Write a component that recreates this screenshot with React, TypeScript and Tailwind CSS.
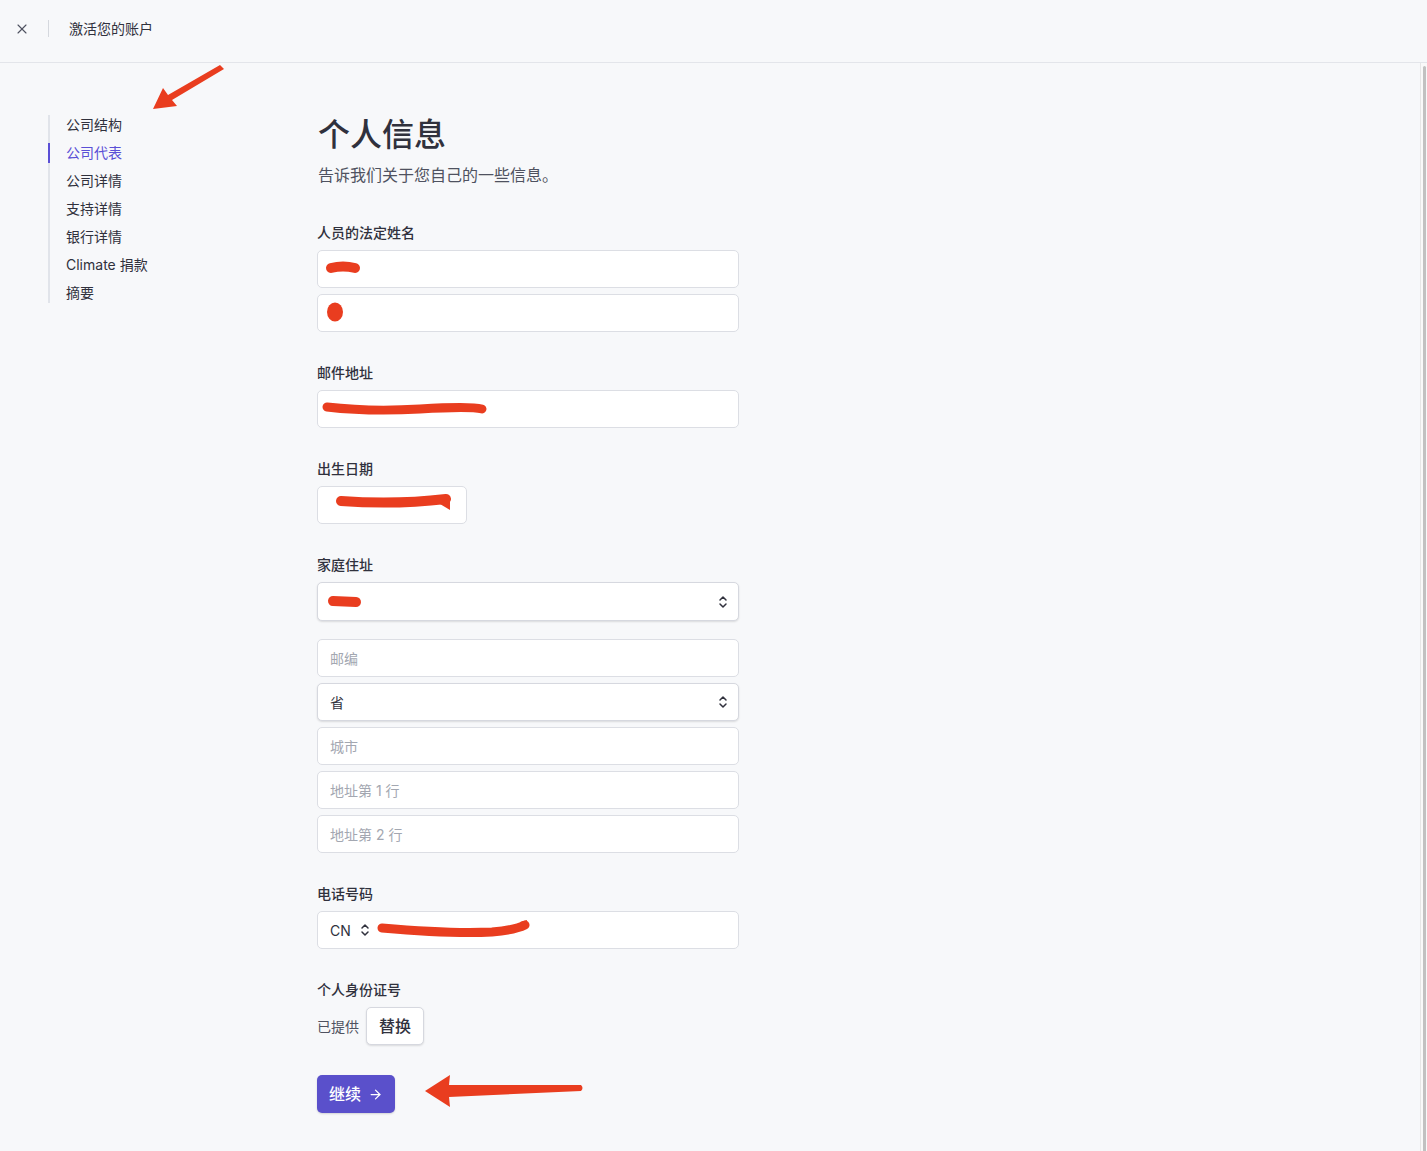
import { X, ArrowRight } from 'lucide-react'

const font = "font-['Inter','Noto_Sans_CJK_SC',sans-serif]"

const steps = ['公司结构', '公司代表', '公司详情', '支持详情', '银行详情', 'Climate 捐款', '摘要']

function UpDown({ className = '' }: { className?: string }) {
  return (
    <svg width="10" height="14" viewBox="0 0 10 14" fill="none" className={className}>
      <path d="M2 5 5 2l3 3M2 9l3 3 3-3" stroke="#30313d" strokeWidth="1.5" strokeLinecap="round" strokeLinejoin="round" />
    </svg>
  )
}

function Field({ placeholder, className = '' }: { placeholder?: string; className?: string }) {
  return (
    <div
      className={`flex h-[38px] items-center rounded-[5px] border border-[#dcdee4] bg-white px-3 text-[14px] text-[#a3a7b1] ${className}`}
    >
      {placeholder}
    </div>
  )
}

function Select({ value, tall = false }: { value?: string; tall?: boolean }) {
  return (
    <div
      className={`flex items-center justify-between rounded-[5px] border border-[#d6d8df] bg-white px-3 text-[14px] text-[#30313d] shadow-[0_1px_2px_rgba(0,0,0,0.12)] ${
        tall ? 'h-[39px]' : 'h-[38px]'
      }`}
    >
      <span>{value}</span>
      <UpDown className="-mr-[2px]" />
    </div>
  )
}

function Label({ children }: { children: React.ReactNode }) {
  return <div className="mb-[7px] text-[14px] leading-5 font-medium text-[#30313d]">{children}</div>
}

export default function App() {
  return (
    <div className={`relative flex min-h-[1151px] flex-col bg-[#f7f8fa] ${font}`}>
      <header className="flex h-[63px] items-center border-b border-[#e3e5ea] pb-[5px] pl-[14px]">
        <X size={16} strokeWidth={1.7} className="text-[#4f5260]" />
        <div className="ml-[18px] h-[17px] w-px bg-[#d5d8de]" />
        <span className="ml-[20px] text-[14px] text-[#30313d]">激活您的账户</span>
      </header>

      <div className="flex flex-1">
        <aside className="w-[317px] shrink-0 pt-[52px] pl-[48px]">
          <ul className="flex w-fit flex-col gap-2 border-l-2 border-[#e1e4ea] pr-4">
            {steps.map((s, i) => (
              <li
                key={s}
                className={`-ml-[2px] border-l-2 pl-[16px] text-[14px] leading-5 ${
                  i === 1 ? 'border-[#5a4fd6] text-[#5a4fd6]' : 'border-transparent text-[#30313d]'
                }`}
              >
                {s}
              </li>
            ))}
          </ul>
        </aside>

        <main className="w-[422px] shrink-0 pt-[54px] text-[#30313d]">
          <h1 className="pl-px text-[32px] leading-9 font-medium">个人信息</h1>
          <p className="mt-[10px] pl-px text-[16px] leading-6 text-[#4f5260]">告诉我们关于您自己的一些信息。</p>

          <section className="mt-[36px]">
            <Label>人员的法定姓名</Label>
            <div className="flex flex-col gap-[6px]">
              <Field />
              <Field />
            </div>
          </section>

          <section className="mt-[31px]">
            <Label>邮件地址</Label>
            <Field />
          </section>

          <section className="mt-[31px]">
            <Label>出生日期</Label>
            <Field className="w-[150px]" />
          </section>

          <section className="mt-[31px]">
            <Label>家庭住址</Label>
            <Select tall />
            <div className="mt-[18px] flex flex-col gap-[6px]">
              <Field placeholder="邮编" />
              <Select value="省" />
              <Field placeholder="城市" />
              <Field placeholder="地址第 1 行" />
              <Field placeholder="地址第 2 行" />
            </div>
          </section>

          <section className="mt-[31px]">
            <Label>电话号码</Label>
            <div className="flex h-[38px] items-center rounded-[5px] border border-[#dcdee4] bg-white px-3 text-[14px] text-[#30313d]">
              <span>CN</span>
              <UpDown className="ml-[9px]" />
            </div>
          </section>

          <section className="mt-[31px]">
            <Label>个人身份证号</Label>
            <div className="flex items-center gap-[7px]">
              <span className="text-[14px] text-[#4f5260]">已提供</span>
              <button className="h-[38px] rounded-[5px] border border-[#d6d8df] bg-white px-3 text-[16px] font-medium text-[#30313d] shadow-[0_1px_2px_rgba(0,0,0,0.12)]">
                替换
              </button>
            </div>
          </section>

          <button className="mt-[30px] flex h-[38px] items-center gap-[7px] rounded-[5px] bg-[#5a50cb] px-3 text-[16px] font-medium text-white shadow-[0_1px_2px_rgba(0,0,0,0.15)]">
            继续
            <ArrowRight size={15} strokeWidth={2} />
          </button>
        </main>

        <div className="flex-1" />

        <div className="w-[7px] shrink-0 border-l border-[#e6e6e6] bg-[#f9f9f9] pt-[3px] pl-[2px]">
          <div className="h-full w-[3px] rounded-t-[2px] bg-[#c1c1c1]" />
        </div>
      </div>

      {/* annotations drawn on top of the screenshot */}
      <svg className="pointer-events-none absolute inset-0" width="1427" height="1151" viewBox="0 0 1427 1151">
        <g stroke="#e93d1f" strokeLinecap="round" fill="none">
          <path d="M331 268 Q343 265 355 268" strokeWidth="10" />
          <path d="M327 407 Q370 412 420 409 T482 409" strokeWidth="9" />
          <path d="M341 501 Q395 505 446 499" strokeWidth="10" />
          <path d="M333 601 L356 602" strokeWidth="10" />
          <path d="M382 928 Q450 934 492 932 Q515 930 525 925" strokeWidth="9" />
        </g>
        <ellipse cx="335" cy="312" rx="8" ry="9.5" fill="#e93d1f" />
        <path d="M440 504 L450 496 L450 510 Z" fill="#e93d1f" />
        <path d="M520 922 L527 920 L526 929 Z" fill="#e93d1f" />
        <g fill="#e93d1f">
          <path d="M153 109 L163 88 L168 95 L220 65 L224 69 L172 100 L177 106 Z" />
          <path d="M425 1091 L450 1075 L449 1085 L581 1085 Q584 1088 581 1091 L449 1097 L450 1107 Z" />
        </g>
      </svg>
    </div>
  )
}
